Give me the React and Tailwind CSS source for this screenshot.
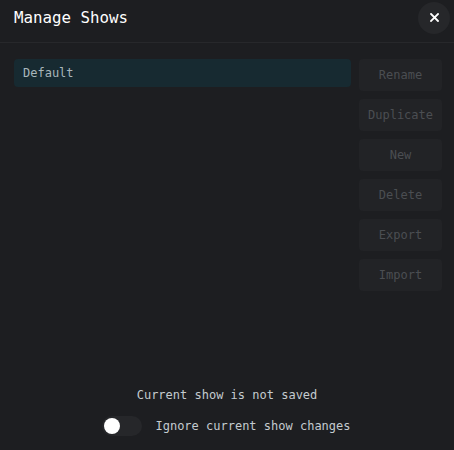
import React from "react";

export default function App() {
  const buttons = ["Rename", "Duplicate", "New", "Delete", "Export", "Import"];
  return (
    <div
      className="w-[454px] h-[450px] bg-[#1d1e21] flex flex-col overflow-hidden"
      style={{ fontFamily: '"DejaVu Sans Mono", "Liberation Mono", monospace' }}
    >
      <div className="h-[43px] border-b border-[#27282b] flex items-center justify-between pl-[14px] pr-[4px]">
        <div className="text-[15.8px] text-white leading-none -mt-[7px]">Manage Shows</div>
        <button className="w-[32px] h-[32px] rounded-full bg-[#26272a] flex items-center justify-center -mt-[7px]">
          <svg width="9" height="9" viewBox="0 0 9 9">
            <path d="M1 1L8 8M8 1L1 8" stroke="#ffffff" strokeWidth="1.8" strokeLinecap="square" />
          </svg>
        </button>
      </div>
      <div className="flex gap-[8px] pl-[14px] pr-[12px] pt-[16px]">
        <div className="flex-1">
          <div className="h-[28px] rounded-[4px] bg-[#172a31] flex items-center pl-[9px] text-[12px] text-[#a9b6bb] leading-none pb-[1px]">
            Default
          </div>
        </div>
        <div className="w-[83px] flex flex-col gap-[8px]">
          {buttons.map((b) => (
            <div
              key={b}
              className="h-[32px] rounded-[4px] bg-[#222326] flex items-center justify-center text-[12px] text-[#4b4e52] leading-none"
            >
              {b}
            </div>
          ))}
        </div>
      </div>
      <div className="flex-1" />
      <div className="flex flex-col items-center pb-[14px]">
        <div className="text-[12px] text-[#c4cbcf] leading-none">Current show is not saved</div>
        <div className="flex items-center gap-[13px] mt-[15px] ml-[-1px]">
          <div className="w-[40px] h-[20px] rounded-full bg-[#26272a] flex items-center pl-[2px]">
            <div className="w-[16px] h-[16px] rounded-full bg-white" />
          </div>
          <div className="text-[12px] text-[#c4cbcf] leading-none">Ignore current show changes</div>
        </div>
      </div>
    </div>
  );
}
